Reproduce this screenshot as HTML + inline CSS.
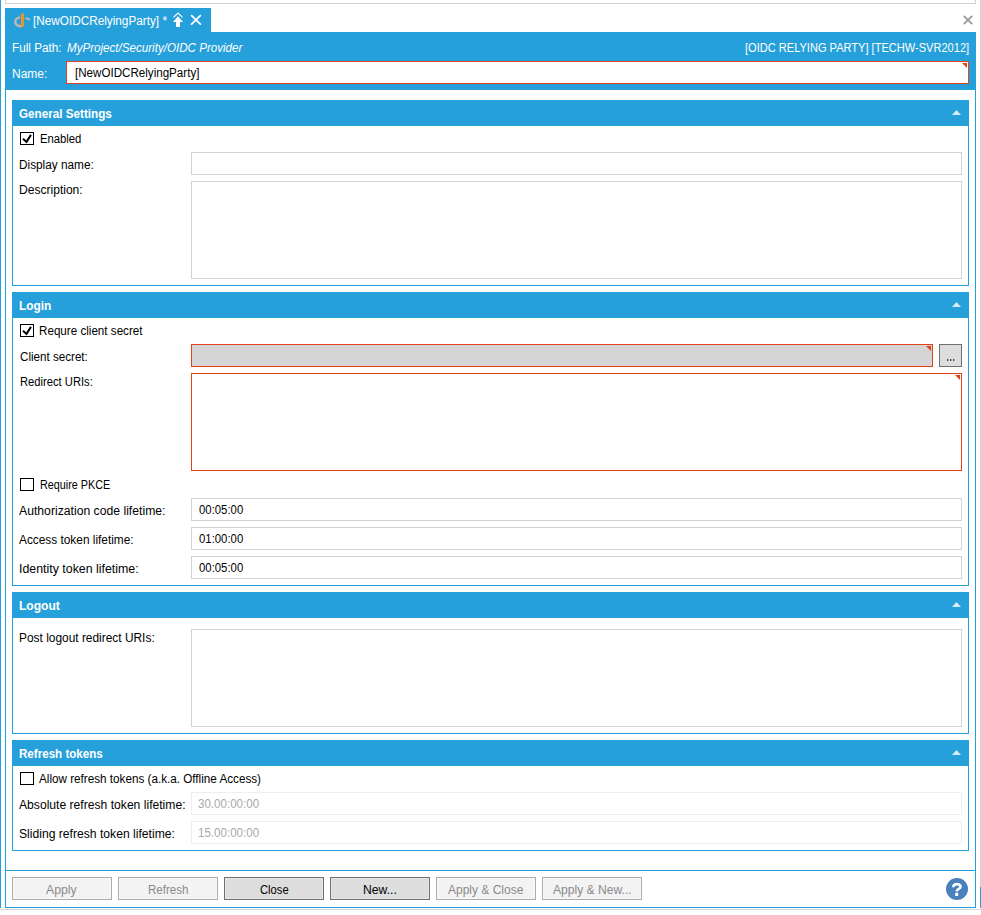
<!DOCTYPE html><html><head><meta charset="utf-8"><style>
html,body{margin:0;padding:0;background:#fff;}
body{width:981px;height:915px;position:relative;overflow:hidden;font-family:"Liberation Sans",sans-serif;}
.t{position:absolute;white-space:nowrap;line-height:0;transform-origin:0 0;}
.r{position:absolute;box-sizing:border-box;}
svg{position:absolute;overflow:visible;}
</style></head><body>
<div class="r" style="left:0px;top:0px;width:1px;height:908px;background:#22a0da;"></div>
<div class="r" style="left:5px;top:-10px;width:971px;height:14px;border:1px solid #d4d2d5;border-top:none;"></div>
<div class="r" style="left:980px;top:0px;width:1px;height:887px;background:#d2d2d2;"></div>
<div class="r" style="left:980px;top:887px;width:1px;height:21px;background:#22a0da;"></div>
<div class="r" style="left:0px;top:909px;width:982px;height:1px;background:#d8d8d8;"></div>
<div class="r" style="left:5px;top:8px;width:206px;height:24px;background:#26a0da;"></div>
<svg style="left:12px;top:11px" width="20" height="18" viewBox="0 0 20 18">
<path d="M8 6.4 C5.2 6.9 3.2 8.5 3.2 10.8 C3.2 13.2 5.8 15.1 9.2 15.5" fill="none" stroke="#bab7b5" stroke-width="2.4"/>
<path d="M9 3 L11.9 2.1 L11.9 15.4 L9 15.9 Z" fill="#f7941e"/>
<path d="M13.2 6.5 L17.8 7 L17.8 9.9 L13.2 7.7 Z" fill="#bab7b5"/>
</svg>
<div class="t" style="left:33.0px;top:21px;font-size:12px;transform:scaleX(0.9800);color:#fff;">[NewOIDCRelyingParty] *</div>
<svg style="left:168px;top:8px" width="40" height="24" viewBox="0 0 40 24">
<path d="M5.5 9.4 L10 5 L14.5 9.4" fill="none" stroke="#fff" stroke-width="1.2"/>
<path d="M4.9 13.9 L10 8.3 L15 13.9 Z" fill="#fff"/>
<rect x="8" y="13.5" width="4" height="5.5" fill="#fff"/>
<path d="M23.6 7.7 L32.3 16.1 M32.3 7.7 L23.6 16.1" stroke="#fff" stroke-width="1.8" stroke-linecap="round"/>
</svg>
<svg style="left:962px;top:14px" width="12" height="12" viewBox="0 0 12 12">
<path d="M1.8 1.8 L10.2 10.2 M10.2 1.8 L1.8 10.2" stroke="#9a9a9a" stroke-width="1.8"/>
</svg>
<div class="r" style="left:5px;top:32px;width:971px;height:58px;background:#26a0da;"></div>
<div class="t" style="left:12.0px;top:48px;font-size:12px;transform:scaleX(0.9792);color:#fff;">Full Path:</div>
<div class="t" style="left:67.0px;top:48px;font-size:12px;transform:scaleX(0.9667);color:#fff;font-style:italic;">MyProject/Security/OIDC Provider</div>
<div class="t" style="left:744.9px;top:48px;font-size:12px;transform:scaleX(0.9217);color:#fff;">[OIDC RELYING PARTY] [TECHW-SVR2012]</div>
<div class="t" style="left:12.0px;top:74px;font-size:12px;transform:scaleX(0.9967);color:#fff;">Name:</div>
<div class="r" style="left:66px;top:61px;width:903px;height:23px;background:#fff;border:1px solid #e1411b;"></div>
<svg style="left:962px;top:63px" width="6" height="6" viewBox="0 0 6 6"><path d="M0 0 L5 0 L5 5 Z" fill="#e1411b"/></svg>
<div class="t" style="left:75.0px;top:73px;font-size:12px;transform:scaleX(0.9667);color:#000;">[NewOIDCRelyingParty]</div>
<div class="r" style="left:5px;top:90px;width:971px;height:818px;border:1px solid #22a0da;border-top:none;"></div>
<div class="r" style="left:5px;top:870px;width:971px;height:1px;background:#22a0da;"></div>
<div class="r" style="left:12px;top:100px;width:957px;height:186px;border:1px solid #22a0da;"></div>
<div class="r" style="left:12px;top:100px;width:957px;height:26px;background:#26a0da;"></div>
<div class="t" style="left:19.0px;top:114px;font-size:12px;transform:scaleX(0.9733);color:#fff;font-weight:bold;">General Settings</div>
<svg style="left:952px;top:110px" width="10" height="6" viewBox="0 0 10 6"><path d="M0 5 L4.5 0 L9 5 Z" fill="#d6ecf8"/></svg>
<div class="r" style="left:20px;top:132px;width:14px;height:13px;background:#fff;border:1px solid #000;"></div>
<svg style="left:20px;top:132px" width="14" height="13" viewBox="0 0 14 13"><path d="M3 6.7 L6.5 9.9 L11 2.9" fill="none" stroke="#000" stroke-width="2"/></svg>
<div class="t" style="left:39.7px;top:139px;font-size:12px;transform:scaleX(0.9392);color:#000;">Enabled</div>
<div class="t" style="left:19.0px;top:165px;font-size:12px;transform:scaleX(0.9831);color:#000;">Display name:</div>
<div class="r" style="left:191px;top:152px;width:771px;height:23px;background:#fff;border:1px solid #d3d1d4;"></div>
<div class="t" style="left:19.0px;top:190px;font-size:12px;transform:scaleX(1.0050);color:#000;">Description:</div>
<div class="r" style="left:191px;top:181px;width:771px;height:98px;background:#fff;border:1px solid #d3d1d4;"></div>
<div class="r" style="left:12px;top:292px;width:957px;height:294px;border:1px solid #22a0da;"></div>
<div class="r" style="left:12px;top:292px;width:957px;height:26px;background:#26a0da;"></div>
<div class="t" style="left:19.0px;top:306px;font-size:12px;transform:scaleX(0.9900);color:#fff;font-weight:bold;">Login</div>
<svg style="left:952px;top:302px" width="10" height="6" viewBox="0 0 10 6"><path d="M0 5 L4.5 0 L9 5 Z" fill="#d6ecf8"/></svg>
<div class="r" style="left:20px;top:324px;width:14px;height:13px;background:#fff;border:1px solid #000;"></div>
<svg style="left:20px;top:324px" width="14" height="13" viewBox="0 0 14 13"><path d="M3 6.7 L6.5 9.9 L11 2.9" fill="none" stroke="#000" stroke-width="2"/></svg>
<div class="t" style="left:39.0px;top:331px;font-size:12px;transform:scaleX(0.9699);color:#000;">Requre client secret</div>
<div class="t" style="left:19.7px;top:357px;font-size:12px;transform:scaleX(0.9683);color:#000;">Client secret:</div>
<div class="r" style="left:191px;top:344px;width:742px;height:23px;background:#d6d5d6;border:1px solid #e1411b;"></div>
<svg style="left:926px;top:346px" width="6" height="6" viewBox="0 0 6 6"><path d="M0 0 L5 0 L5 5 Z" fill="#e1411b"/></svg>
<div class="r" style="left:939px;top:344px;width:23px;height:23px;background:#dddddd;border:1px solid #707070;"></div>
<svg style="left:946px;top:358px" width="10" height="4" viewBox="0 0 10 4"><rect x="1.2" y="1" width="1.1" height="2" fill="#2a2a3a"/><rect x="4.2" y="1" width="1.1" height="2" fill="#2a2a3a"/><rect x="7.2" y="1" width="1.1" height="2" fill="#2a2a3a"/></svg>
<div class="t" style="left:19.7px;top:382px;font-size:12px;transform:scaleX(0.9333);color:#000;">Redirect URIs:</div>
<div class="r" style="left:191px;top:373px;width:771px;height:98px;background:#fff;border:1px solid #e1411b;"></div>
<svg style="left:955px;top:375px" width="6" height="6" viewBox="0 0 6 6"><path d="M0 0 L5 0 L5 5 Z" fill="#e1411b"/></svg>
<div class="r" style="left:20px;top:478px;width:14px;height:13px;background:#fff;border:1px solid #000;"></div>
<div class="t" style="left:39.7px;top:485px;font-size:12px;transform:scaleX(0.9000);color:#000;">Require PKCE</div>
<div class="t" style="left:19.0px;top:511px;font-size:12px;transform:scaleX(1.0167);color:#000;">Authorization code lifetime:</div>
<div class="r" style="left:191px;top:498px;width:771px;height:23px;background:#fff;border:1px solid #d3d1d4;"></div>
<div class="t" style="left:199.0px;top:510px;font-size:12px;transform:scaleX(0.9467);color:#000;">00:05:00</div>
<div class="t" style="left:19.0px;top:540px;font-size:12px;transform:scaleX(0.9875);color:#000;">Access token lifetime:</div>
<div class="r" style="left:191px;top:527px;width:771px;height:23px;background:#fff;border:1px solid #d3d1d4;"></div>
<div class="t" style="left:199.0px;top:539px;font-size:12px;transform:scaleX(0.9467);color:#000;">01:00:00</div>
<div class="t" style="left:19.0px;top:569px;font-size:12px;transform:scaleX(1.0308);color:#000;">Identity token lifetime:</div>
<div class="r" style="left:191px;top:556px;width:771px;height:23px;background:#fff;border:1px solid #d3d1d4;"></div>
<div class="t" style="left:199.0px;top:568px;font-size:12px;transform:scaleX(0.9467);color:#000;">00:05:00</div>
<div class="r" style="left:12px;top:592px;width:957px;height:142px;border:1px solid #22a0da;"></div>
<div class="r" style="left:12px;top:592px;width:957px;height:26px;background:#26a0da;"></div>
<div class="t" style="left:19.0px;top:606px;font-size:12px;transform:scaleX(1.0058);color:#fff;font-weight:bold;">Logout</div>
<svg style="left:952px;top:602px" width="10" height="6" viewBox="0 0 10 6"><path d="M0 5 L4.5 0 L9 5 Z" fill="#d6ecf8"/></svg>
<div class="t" style="left:19.0px;top:638px;font-size:12px;transform:scaleX(0.9925);color:#000;">Post logout redirect URIs:</div>
<div class="r" style="left:191px;top:629px;width:771px;height:98px;background:#fff;border:1px solid #d3d1d4;"></div>
<div class="r" style="left:12px;top:740px;width:957px;height:111px;border:1px solid #22a0da;"></div>
<div class="r" style="left:12px;top:740px;width:957px;height:26px;background:#26a0da;"></div>
<div class="t" style="left:19.0px;top:754px;font-size:12px;transform:scaleX(0.9658);color:#fff;font-weight:bold;">Refresh tokens</div>
<svg style="left:952px;top:750px" width="10" height="6" viewBox="0 0 10 6"><path d="M0 5 L4.5 0 L9 5 Z" fill="#d6ecf8"/></svg>
<div class="r" style="left:20px;top:772px;width:14px;height:13px;background:#fff;border:1px solid #000;"></div>
<div class="t" style="left:39.0px;top:779px;font-size:12px;transform:scaleX(0.9742);color:#000;">Allow refresh tokens (a.k.a. Offline Access)</div>
<div class="t" style="left:19.0px;top:805px;font-size:12px;transform:scaleX(1.0108);color:#000;">Absolute refresh token lifetime:</div>
<div class="r" style="left:191px;top:792px;width:771px;height:23px;background:#fff;border:1px solid #eeeeee;"></div>
<div class="t" style="left:198.3px;top:804px;font-size:12px;transform:scaleX(0.9633);color:#a8a8a8;">30.00:00:00</div>
<div class="t" style="left:19.0px;top:834px;font-size:12px;transform:scaleX(1.0117);color:#000;">Sliding refresh token lifetime:</div>
<div class="r" style="left:191px;top:821px;width:771px;height:23px;background:#fff;border:1px solid #eeeeee;"></div>
<div class="t" style="left:198.3px;top:833px;font-size:12px;transform:scaleX(0.9633);color:#a8a8a8;">15.00:00:00</div>
<div class="r" style="left:12px;top:877px;width:100px;height:23px;background:#f3f3f3;border:1px solid #a9adb0;box-shadow:inset 0 0 0 1px #f9f9f9;"></div>
<div class="t" style="left:46.0px;top:890px;font-size:12px;transform:scaleX(1.0208);color:#8a8a8a;">Apply</div>
<div class="r" style="left:118px;top:877px;width:100px;height:23px;background:#f3f3f3;border:1px solid #a9adb0;box-shadow:inset 0 0 0 1px #f9f9f9;"></div>
<div class="t" style="left:148.3px;top:890px;font-size:12px;transform:scaleX(0.9633);color:#8a8a8a;">Refresh</div>
<div class="r" style="left:224px;top:877px;width:100px;height:23px;background:#dddddd;border:1px solid #707070;box-shadow:inset 0 0 0 1px #e6e6e6;"></div>
<div class="t" style="left:260.0px;top:890px;font-size:12px;transform:scaleX(0.9333);color:#000;">Close</div>
<div class="r" style="left:330px;top:877px;width:100px;height:23px;background:#dddddd;border:1px solid #707070;box-shadow:inset 0 0 0 1px #e6e6e6;"></div>
<div class="t" style="left:363.3px;top:890px;font-size:12px;transform:scaleX(1.0132);color:#000;">New...</div>
<div class="r" style="left:436px;top:877px;width:100px;height:23px;background:#f3f3f3;border:1px solid #a9adb0;box-shadow:inset 0 0 0 1px #f9f9f9;"></div>
<div class="t" style="left:448.0px;top:890px;font-size:12px;transform:scaleX(1.0000);color:#8a8a8a;">Apply &amp; Close</div>
<div class="r" style="left:542px;top:877px;width:100px;height:23px;background:#f3f3f3;border:1px solid #a9adb0;box-shadow:inset 0 0 0 1px #f9f9f9;"></div>
<div class="t" style="left:553.0px;top:890px;font-size:12px;transform:scaleX(1.0075);color:#8a8a8a;">Apply &amp; New...</div>
<svg style="left:946px;top:878px" width="22" height="22" viewBox="0 0 22 22">
<circle cx="11" cy="11" r="11" fill="#4a80bd"/>
<path d="M7.2 9.2 C7.2 7 8.8 6.1 10.9 6.1 C13 6.1 14.6 7.2 14.6 8.8 C14.6 11 10.7 11 10.7 13.4" fill="none" stroke="#fff" stroke-width="2.6"/>
<rect x="9.2" y="14.8" width="3" height="3.2" fill="#fff"/>
</svg>
</body></html>
